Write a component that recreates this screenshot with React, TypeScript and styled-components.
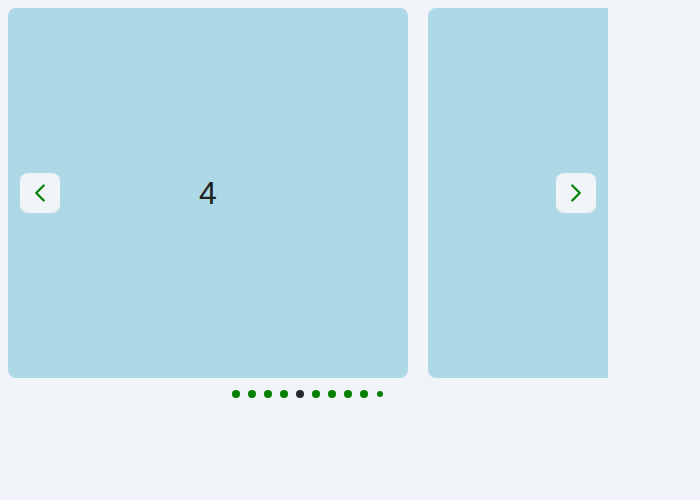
import React, { useState } from "react";
import styled, { createGlobalStyle } from "styled-components";

const Global = createGlobalStyle`
  html, body { background: #f0f4f8; }
  body { margin: 8px; font-family: "Liberation Sans", Arial, sans-serif; }
`;

const Carousel = styled.div`
  width: 600px;
  display: flex;
  flex-direction: column;
`;

const Viewport = styled.div`
  position: relative;
  width: 600px;
  height: 370px;
  overflow: hidden;
`;

const Track = styled.div`
  display: flex;
  gap: 20px;
  height: 100%;
`;

const Slide = styled.div`
  flex: 0 0 400px;
  height: 370px;
  background: #add8e6;
  border-radius: 8px;
  display: flex;
  align-items: center;
  justify-content: center;
  font-size: 32px;
  color: #222;
`;

const NavButton = styled.button<{ $side: "left" | "right" }>`
  position: absolute;
  top: 165px;
  ${(p) => (p.$side === "left" ? "left: 12px;" : "right: 12px;")}
  width: 40px;
  height: 40px;
  border: none;
  border-radius: 8px;
  background: #f0f4f8;
  display: flex;
  align-items: center;
  justify-content: center;
  padding: 0;
  cursor: pointer;
`;

const Dots = styled.div`
  display: flex;
  justify-content: center;
  gap: 8px;
  margin-top: 12px;
`;

const Dot = styled.span<{ $active?: boolean; $small?: boolean }>`
  width: 8px;
  height: 8px;
  border-radius: 50%;
  background: ${(p) => (p.$active ? "#25272c" : "#008000")};
  transform: ${(p) => (p.$small ? "scale(0.75)" : "none")};
`;

const Chevron = ({ dir }: { dir: "left" | "right" }) => (
  <svg width="30" height="30" viewBox="0 0 24 24" fill="none" stroke="#008000" strokeWidth="1.8" strokeLinecap="round" strokeLinejoin="round">
    {dir === "left" ? <path d="M15 18l-6-6 6-6" /> : <path d="M9 18l6-6-6-6" />}
  </svg>
);

export default function App() {
  const [active] = useState(4);
  return (
    <>
      <Global />
      <Carousel>
        <Viewport>
          <Track>
            <Slide>4</Slide>
            <Slide />
          </Track>
          <NavButton $side="left" aria-label="Previous">
            <Chevron dir="left" />
          </NavButton>
          <NavButton $side="right" aria-label="Next">
            <Chevron dir="right" />
          </NavButton>
        </Viewport>
        <Dots>
          {Array.from({ length: 10 }, (_, i) => (
            <Dot key={i} $active={i === active} $small={i === 9} />
          ))}
        </Dots>
      </Carousel>
    </>
  );
}
